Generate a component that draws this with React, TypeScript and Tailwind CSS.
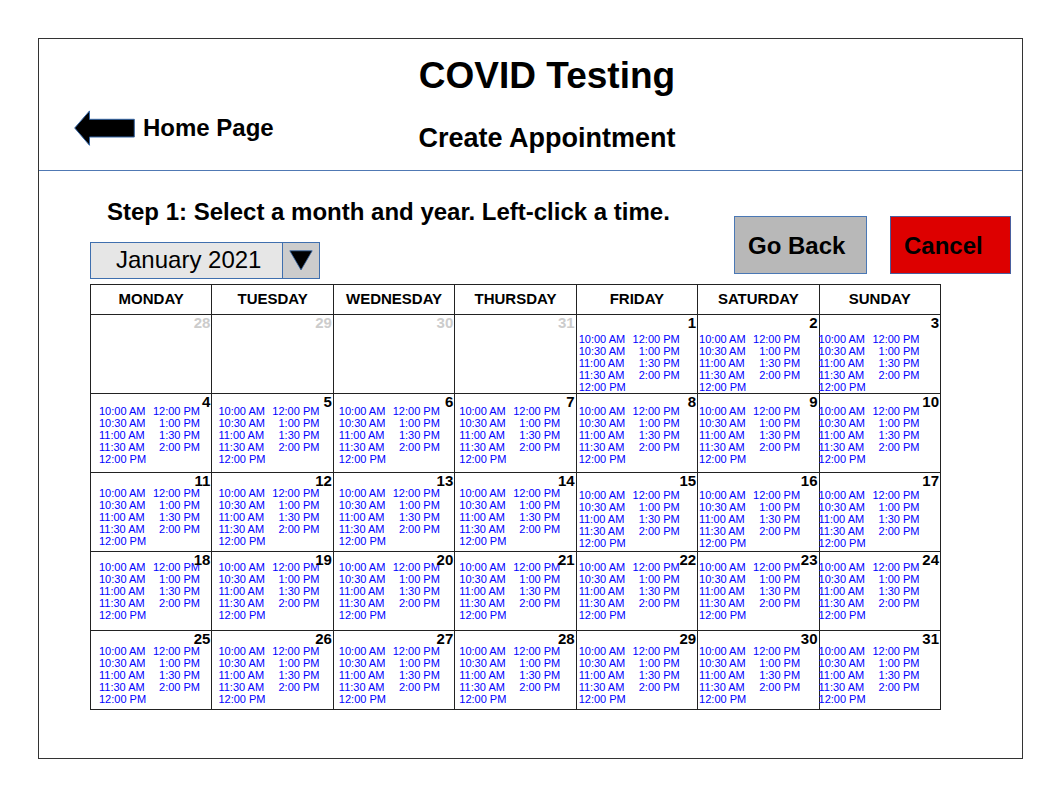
import React, { useState } from "react";

const weekdays = ["MONDAY", "TUESDAY", "WEDNESDAY", "THURSDAY", "FRIDAY", "SATURDAY", "SUNDAY"];

const months = ["January 2021", "February 2021", "March 2021"];

const firstColumn = ["10:00 AM", "10:30 AM", "11:00 AM", "11:30 AM", "12:00 PM"];
const secondColumn = ["12:00 PM", "1:00 PM", "1:30 PM", "2:00 PM"];

type Week = { days: number[]; weekday: string; weekend: string };

const weeks: Week[] = [
  { days: [28, 29, 30, 31, 1, 2, 3], weekday: "pt-[18px]", weekend: "pt-[18px]" },
  { days: [4, 5, 6, 7, 8, 9, 10], weekday: "pt-[11px]", weekend: "pt-[11px]" },
  { days: [11, 12, 13, 14, 15, 16, 17], weekday: "pt-[14px]", weekend: "pt-[16px]" },
  { days: [18, 19, 20, 21, 22, 23, 24], weekday: "pt-[9px]", weekend: "pt-[9px]" },
  { days: [25, 26, 27, 28, 29, 30, 31], weekday: "pt-[14px]", weekend: "pt-[14px]" },
];

const columnInset = ["pl-2", "pl-[6px]", "pl-[5px]", "pl-[4px]", "pl-[2px]", "pl-px", "-ml-px"];

function TimeButton({ time, day }: { time: string; day: number }) {
  return (
    <button type="button" aria-label={`${time}, day ${day}`} className="block cursor-pointer whitespace-nowrap">
      {time}
    </button>
  );
}

function Times({ day, inset }: { day: number; inset: string }) {
  return (
    <div className={`col-start-1 row-start-1 flex items-start text-[11px] leading-3 text-[#0000ff] ${inset}`}>
      <div className="flex w-[54px] flex-col items-start">
        {firstColumn.map((time) => (
          <TimeButton key={time} time={time} day={day} />
        ))}
      </div>
      <div className="flex w-[47px] flex-col items-end">
        {secondColumn.map((time) => (
          <TimeButton key={time} time={time} day={day} />
        ))}
      </div>
    </div>
  );
}

function Header() {
  return (
    <header className="grid grid-cols-[1fr_auto_1fr] border-b border-[#5079b4] pt-[15px] pr-0.5 pb-4 pl-[35px]">
      <a href="#home" className="flex items-center gap-2 self-end justify-self-start pb-2 text-2xl leading-7 font-bold">
        <svg width="61" height="36" viewBox="0 0 61 36" aria-hidden="true">
          <path d="M0.7 18 L15.5 0.9 V9.3 H60.3 V27 H15.5 V35.3 Z" fill="#000" stroke="#3465a4" strokeWidth="1" />
        </svg>
        Home Page
      </a>
      <div className="flex flex-col items-center gap-6">
        <h1 className="text-[37px] leading-[44px] font-bold">COVID Testing</h1>
        <h2 className="text-[27px] leading-8 font-bold">Create Appointment</h2>
      </div>
    </header>
  );
}

function MonthPicker() {
  const [month, setMonth] = useState(months[0]);
  return (
    <div className="relative w-[230px]">
      <select
        aria-label="Month and year"
        value={month}
        onChange={(e) => setMonth(e.target.value)}
        className="block h-[37px] w-full appearance-none border border-[#3f6fae] bg-[#e6e6e6] pr-10 pb-0.5 pl-[25px] text-2xl leading-7"
      >
        {months.map((m) => (
          <option key={m}>{m}</option>
        ))}
      </select>
      <span className="pointer-events-none absolute inset-y-0 right-0 flex w-[38px] items-center justify-center border border-[#3f6fae] bg-[#cccccc]">
        <svg width="24" height="21" viewBox="0 0 24 21" aria-hidden="true">
          <path d="M0.8 0.8 H23.2 L12 20 Z" fill="#000" stroke="#3465a4" strokeWidth="0.8" />
        </svg>
      </span>
    </div>
  );
}

function Calendar() {
  return (
    <table className="w-full table-fixed border-collapse">
      <thead>
        <tr>
          {weekdays.map((name) => (
            <th key={name} scope="col" className="h-[30px] border border-[#222] p-0 pb-0.5 text-center text-[15px] leading-4 font-bold">
              {name}
            </th>
          ))}
        </tr>
      </thead>
      <tbody>
        {weeks.map((week, w) => (
          <tr key={w}>
            {week.days.map((day, d) => {
              const previousMonth = w === 0 && day > 7;
              return (
                <td key={d} className="h-[79px] border border-[#222] p-0 align-top">
                  <div className="grid">
                    {!previousMonth && (
                      <Times day={day} inset={`${columnInset[d]} ${d < 4 ? week.weekday : week.weekend}`} />
                    )}
                    <span
                      className={`pointer-events-none col-start-1 row-start-1 self-start justify-self-end pr-px text-[15px] leading-4 font-bold ${
                        previousMonth ? "text-[#cccccc]" : "text-black"
                      }`}
                    >
                      {day}
                    </span>
                  </div>
                </td>
              );
            })}
          </tr>
        ))}
      </tbody>
    </table>
  );
}

export default function App() {
  return (
    <div className="min-h-screen bg-white pt-[38px] pr-[35px] pb-[35px] pl-[38px] font-['Liberation_Sans',Arial,sans-serif] text-black">
      <div className="border border-[#333]">
        <Header />
        <main className="pt-[27px] pb-12 pl-[51px]">
          <div className="flex items-start justify-between pr-[11px] pb-[5px]">
            <div className="flex flex-col gap-4">
              <p className="pl-[17px] text-2xl leading-7 font-bold">
                Step 1: Select a month and year. Left-click a time.
              </p>
              <MonthPicker />
            </div>
            <div className="flex gap-[23px] pt-[18px]">
              <button
                type="button"
                className="h-[58px] w-[133px] border border-[#4a78b5] bg-[#b8b8b8] pt-0.5 pl-[13px] text-left text-2xl leading-7 font-bold"
              >
                Go Back
              </button>
              <button
                type="button"
                className="h-[58px] w-[121px] border border-[#4a5f9e] bg-[#dd0000] pt-0.5 pl-[13px] text-left text-2xl leading-7 font-bold"
              >
                Cancel
              </button>
            </div>
          </div>
          <div className="pr-[81px]">
            <Calendar />
          </div>
        </main>
      </div>
    </div>
  );
}
